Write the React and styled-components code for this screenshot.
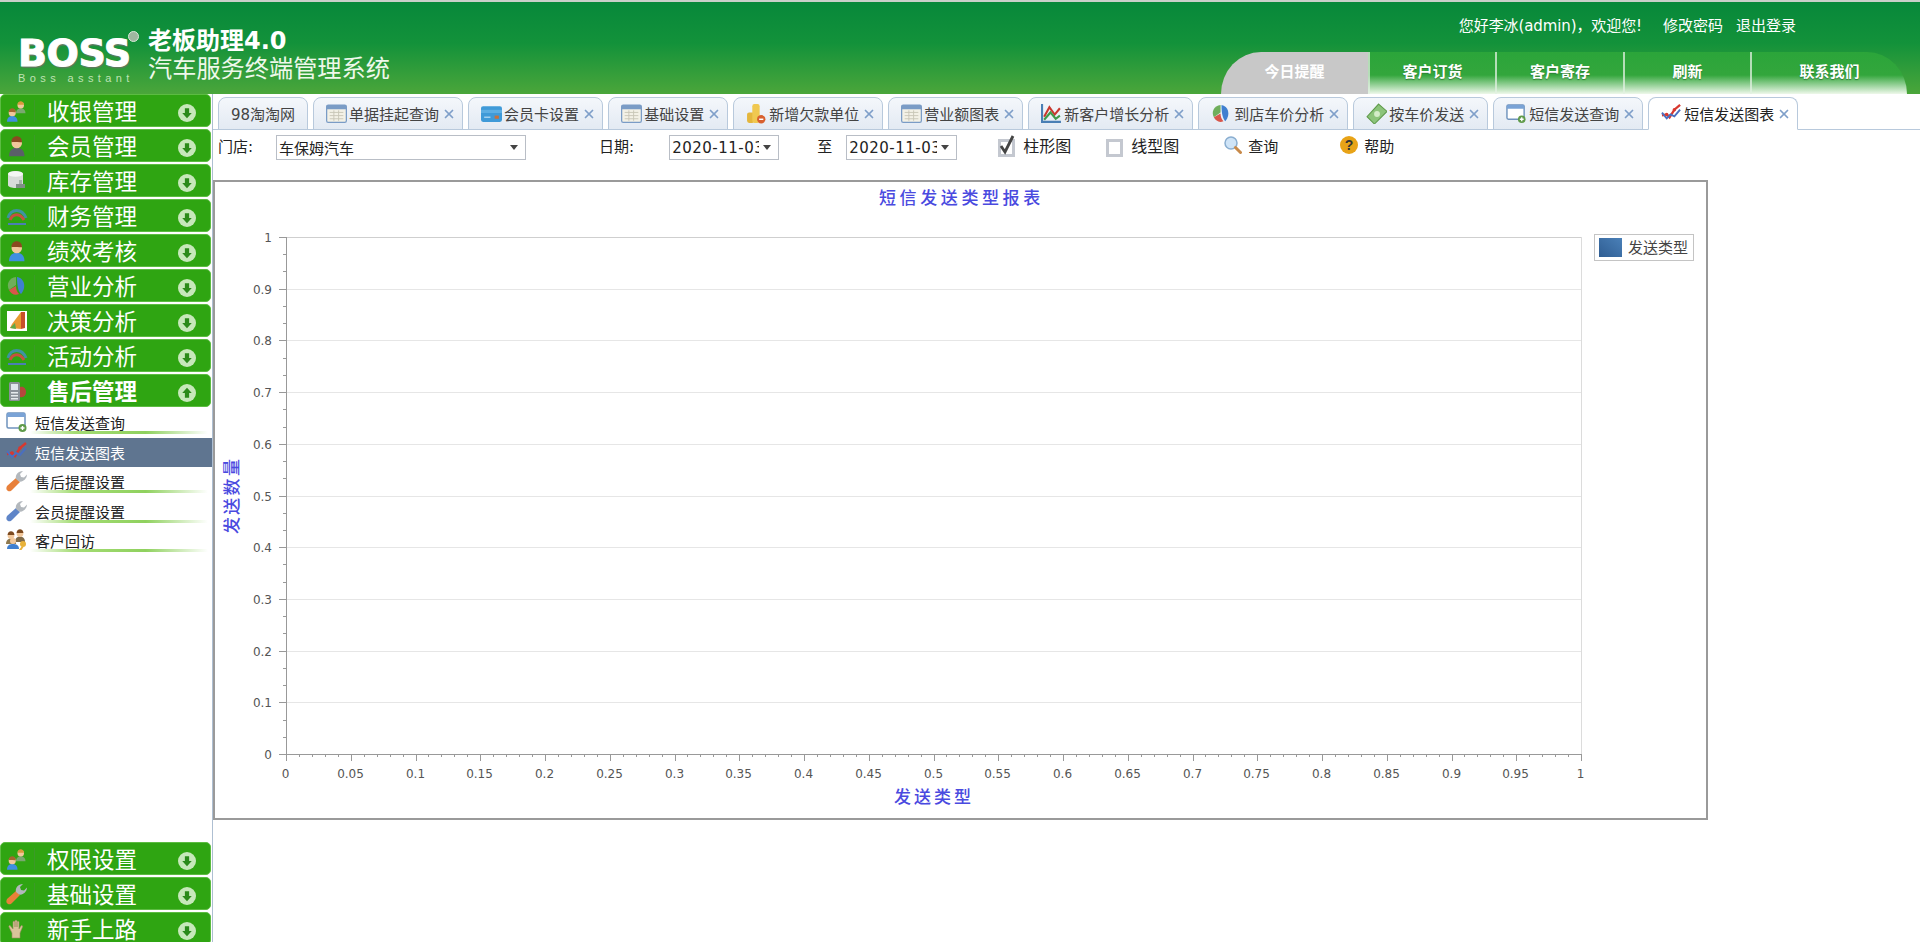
import React from 'react';
import styled, { createGlobalStyle } from 'styled-components';
import { X } from 'lucide-react';

const GlobalStyle = createGlobalStyle`
  html, body {
    margin: 0;
    height: 100%;
    overflow: hidden;
    background: #fff;
    font-family: "DejaVu Sans", "Noto Sans CJK SC", sans-serif;
  }
`;

const Page = styled.div`
  height: 942px;
  display: flex;
  flex-direction: column;
  overflow: hidden;
`;

/* header */
const Header = styled.header`
  height: 92px;
  flex: none;
  border-top: 2px solid #c9cfc9;
  background: linear-gradient(#07883a 0%, #13923a 45%, #4ba63a 100%);
  display: flex;
  justify-content: space-between;
`;

const Brand = styled.div`
  display: flex;
  gap: 16px;
  padding-left: 18px;
`;

const BossMark = styled.div`
  position: relative;
  width: 114px;
  padding-top: 33px;
`;

const BossWord = styled.div`
  font-size: 38px;
  line-height: 36px;
  font-weight: 700;
  color: #fff;
  -webkit-text-stroke: 1px #fff;
  text-shadow: 1px 2px 1px #5d7a5d;
  letter-spacing: -0.4px;
`;

const BossSub = styled.div`
  font-family: "Liberation Sans", sans-serif;
  font-size: 11px;
  line-height: 12px;
  margin-top: 1px;
  color: #bfe3b4;
  letter-spacing: 4.4px;
  white-space: nowrap;
`;

const RegMark = styled.div`
  position: absolute;
  top: 29px;
  right: -7px;
  width: 9px;
  height: 9px;
  border: 1px solid #d8e8d8;
  border-radius: 50%;
  background: #9fb7a0;
`;

const BrandTitle = styled.div`
  padding-top: 26px;
  color: #fff;
`;

const TitleMain = styled.div`
  font-size: 24px;
  line-height: 27px;
  font-weight: 700;
`;

const TitleSub = styled.div`
  font-size: 24.2px;
  line-height: 28px;
  color: #eef8ea;
  white-space: nowrap;
`;

const HeaderRight = styled.div`
  display: flex;
  flex-direction: column;
  align-items: flex-end;
  padding-right: 13px;
`;

const Greeting = styled.div`
  display: flex;
  margin: 15px 111px 0 0;
  gap: 13px;
  font-size: 15px;
  line-height: 18px;
  color: #fff;
`;

const GreetingName = styled.span`
  margin-right: 8px;
  letter-spacing: -0.1px;
`;

const Nav = styled.nav`
  display: flex;
  margin-top: auto;
`;

const NavTab = styled.div`
  width: ${p => p.$w}px;
  height: 42px;
  box-sizing: border-box;
  display: flex;
  align-items: center;
  justify-content: center;
  padding-bottom: 5px;
  font-size: 15px;
  font-weight: 700;
  color: #fff;
  text-shadow: ${p => (p.$active ? 'none' : '0 1px 1px #2f7d35')};
  background: ${p => (p.$active ? '#c8c8c8' : 'linear-gradient(#2ba53a 0%, #33a63c 55%, #eef8ea 100%)')};
  border-left: ${p => (p.$active ? '0' : '2px solid rgba(225, 240, 225, 0.75)')};
  border-top-left-radius: ${p => (p.$active ? '40px 42px' : '0')};
  border-top-right-radius: ${p => (p.$last ? '40px 42px' : '0')};
`;

/* body */
const Body = styled.div`
  flex: 1;
  min-height: 0;
  display: flex;
`;

const Sidebar = styled.aside`
  width: 212px;
  flex: none;
  border-right: 1px solid #aebfd2;
  display: flex;
  flex-direction: column;
  overflow: hidden;
`;

const MenuTop = styled.div`
  flex: 1;
  min-height: 0;
`;

const MenuBottom = styled.div`
  height: 100px;
  flex: none;
  overflow: hidden;
`;

const MenuItem = styled.div`
  height: 33px;
  width: 211px;
  margin-bottom: 2px;
  box-sizing: border-box;
  display: flex;
  align-items: center;
  background: #2fa512;
  border: 1px solid #5cbc42;
  border-radius: 5px;
  color: #fff;
`;

const MenuIcon = styled.span`
  width: 34px;
  height: 22px;
  flex: none;
  padding-left: 5px;
  box-sizing: border-box;
  display: flex;
  align-items: center;
  border-right: 1px solid #3c9a28;
`;

const MenuLabel = styled.span`
  flex: 1;
  margin-left: 12px;
  padding-top: 3px;
  font-size: 22.5px;
  line-height: 28px;
  font-weight: ${p => (p.$open ? 700 : 400)};
`;

const MenuArrow = styled.span`
  display: flex;
  margin: 4px 14px 0 0;
`;

const SubList = styled.div`
  margin-top: -1px;
`;

const SubItem = styled.div`
  height: 29.5px;
  display: flex;
  align-items: flex-start;
  padding-left: 6px;
  font-size: 15px;
  line-height: 32px;
  color: ${p => (p.$active ? '#fff' : '#222')};
  background: ${p =>
    p.$active
      ? '#5f7590'
      : 'linear-gradient(to right, transparent, #a4dc74 25%, #8fd15e 65%, transparent) 30px 23px / 178px 3px no-repeat'};
`;

const SubIcon = styled.span`
  width: 29px;
  height: 28px;
  flex: none;
  display: flex;
  align-items: center;
`;

/* main */
const Main = styled.main`
  flex: 1;
  min-width: 0;
  display: flex;
  flex-direction: column;
`;

const TabBar = styled.div`
  height: 36px;
  flex: none;
  box-sizing: border-box;
  display: flex;
  align-items: flex-end;
  gap: 5px;
  padding-left: 5px;
  border-bottom: 1px solid #b8c9dc;
`;

const Tab = styled.div`
  height: 33px;
  box-sizing: border-box;
  display: flex;
  align-items: center;
  margin-bottom: -1px;
  padding: ${p => (p.$plain ? '0 12px' : '0 8px 0 12px')};
  font-size: 15px;
  color: ${p => (p.$active ? '#222' : '#444')};
  white-space: nowrap;
  border: 1px solid #b8c9dc;
  border-bottom-color: ${p => (p.$active ? '#fff' : '#b8c9dc')};
  border-radius: 8px 8px 0 0;
  background: ${p => (p.$active ? '#fff' : 'linear-gradient(#f4f7fb, #e3eaf3)')};
`;

const TabIcon = styled.span`
  width: 19px;
  height: 21px;
  margin-right: 4px;
  display: flex;
  align-items: center;

  svg {
    width: 21px;
    height: 21px;
    flex: none;
  }
`;

const TabClose = styled.span`
  width: 10px;
  margin-left: 5px;
  display: flex;
  justify-content: center;
  color: #7f9fc9;

  svg {
    flex: none;
  }
`;

const Toolbar = styled.div`
  height: 50px;
  flex: none;
  display: flex;
  align-items: flex-start;
  padding: 5px 0 0 5px;
  box-sizing: border-box;
`;

const ToolText = styled.span`
  margin-left: ${p => p.$ml || 0}px;
  font-size: ${p => p.$size || 15}px;
  line-height: 24px;
  color: #222;
  white-space: nowrap;
`;

const Select = styled.div`
  width: ${p => p.$w}px;
  height: 25px;
  margin-left: ${p => p.$ml}px;
  box-sizing: border-box;
  display: flex;
  align-items: center;
  justify-content: space-between;
  padding: 0 7px 0 2px;
  border: 1px solid #b9bec6;
  font-size: 15px;
  letter-spacing: ${p => (p.$date ? '0.5px' : '0')};
  color: #222;
  background: #fff;
`;

const SelectValue = styled.span`
  overflow: hidden;
  white-space: nowrap;
  flex: 1;
  min-width: 0;
`;

const SelectCaret = styled.span`
  flex: none;
  margin-left: 4px;
  border-left: 4px solid transparent;
  border-right: 4px solid transparent;
  border-top: 5px solid #444;
`;

const CheckBox = styled.span`
  width: 17px;
  height: 18px;
  margin: 4px 0 0 ${p => p.$ml}px;
  box-sizing: border-box;
  display: flex;
  align-items: center;
  justify-content: center;
  background: #fff;
  border: 3px solid #c4c8d0;
`;

const ToolIcon = styled.span`
  width: 18px;
  height: 18px;
  margin: 1px 0 0 ${p => p.$ml}px;
  display: flex;
`;

const ChartBox = styled.div`
  width: 1495px;
  height: 640px;
  box-sizing: border-box;
  border: 2px solid #9a9a9a;
  background: #fff;
`;

/* icons */
const Ic = ({ children, vb = 22 }) => (
  <svg width="22" height="22" viewBox={`0 0 ${vb} ${vb}`}>{children}</svg>
);

const Person = ({ x, y, s = 1, shirt, hair = '#a5662e' }) => (
  <g transform={`translate(${x} ${y}) scale(${s})`}>
    <path d="M0 13c0-4 2.500-5.500 5-5.500s5 1.500 5 5.500z" fill={shirt} />
    <circle cx="5" cy="4.500" r="3.400" fill="#f1c79b" />
    <path d="M1.600 4c0-2.500 1.600-3.800 3.400-3.800s3.400 1.300 3.400 3.800c-2 .2-4.500-.3-6.800 0z" fill={hair} />
  </g>
);

const UsersIcon = () => (
  <Ic>
    <Person x={10} y={1} s={0.95} shirt="#7aa870" hair="#d99a3c" />
    <Person x={1} y={8} s={1.05} shirt="#3f8fe0" />
  </Ic>
);
const WorkerIcon = () => (
  <Ic><Person x={3} y={1} s={1.55} shirt="#5a5f68" hair="#8a4a20" /></Ic>
);
const BlueManIcon = () => (
  <Ic><Person x={3} y={1} s={1.55} shirt="#3f8fe0" hair="#8a4a20" /></Ic>
);
const DbIcon = () => (
  <Ic>
    <path d="M2 4c0-4 15-4 15 0v11c0 4-15 4-15 0z" fill="#d7dcd8" />
    <ellipse cx="9.500" cy="4" rx="7.500" ry="2.800" fill="#f4f6f4" />
    <path d="M10 14h9v4h-9z" fill="#7f8f85" />
    <path d="M13 10h3v4h-3z" fill="#a5b2aa" />
  </Ic>
);
const ArcIcon = () => (
  <Ic>
    <path d="M2 13C5 3 16 3 20 13" fill="none" stroke="#3d93a0" strokeWidth="3" />
    <path d="M4 15C7 8 14 8 18 15" fill="none" stroke="#c8503f" strokeWidth="3" />
    <path d="M2 19h18" stroke="#4a7fb5" strokeWidth="2" />
  </Ic>
);
const PieIcon = () => (
  <Ic>
    <path d="M10 10 3 15C0 9 3 3 10 2z" fill="#6fae5b" />
    <path d="M11 2c7 1 10 10 4 17-2-2-4-6-4-17z" fill="#3f7fd0" />
    <path d="M3 15l7-4c0 3 1 6 3 8-4 2-8 0-10-4z" fill="#d8564a" />
  </Ic>
);
const DecisionIcon = () => (
  <Ic>
    <path d="M1 1h20v20H1z" fill="#fff" />
    <path d="M15 2h4v16l-4 1z" fill="#c8502a" />
    <path d="M15 2 6 14l-2 4 11 1z" fill="#e89a32" />
    <path d="M4 18l5-5 1 6z" fill="#5fa84a" />
  </Ic>
);
const PhoneIcon = () => (
  <Ic>
    <path d="M14 7c4-1 6 2 6 5s-2 6-6 5z" fill="#b5473c" />
    <rect x="3" y="2" width="11" height="19" rx="1.500" fill="#8a9097" />
    <rect x="5" y="4" width="7" height="6" fill="#dfe6ec" />
    <path d="M5 12h7v1.500H5zM5 15h7v1.500H5zM5 18h7v1.500H5z" fill="#e6e9ec" />
  </Ic>
);
const WindowPlusIcon = () => (
  <Ic>
    <rect x="1" y="2" width="18" height="15" rx="1.500" fill="#fff" stroke="#6f93bd" strokeWidth="1.500" />
    <path d="M1 3.500C1 2.500 2 2 2.500 2h15c1 0 1.500.5 1.500 1.500V6H1z" fill="#7aa3d6" />
    <circle cx="16.500" cy="17" r="4" fill="#5f9a4a" />
    <path d="M14.500 17h4M16.500 15v4" stroke="#fff" strokeWidth="1.400" />
  </Ic>
);
const LineChartIcon = () => (
  <Ic>
    <path d="M1 13l5-1 3 3 5-8 6-5" fill="none" stroke="#d8382f" strokeWidth="2.400" />
    <path d="M1 10l5 6 4-4 4 2 6-7" fill="none" stroke="#4a6fc0" strokeWidth="2" />
    <circle cx="6" cy="12" r="1.800" fill="#d8382f" />
    <circle cx="14" cy="7" r="1.800" fill="#d8382f" />
  </Ic>
);
const WrenchIcon = ({ color }) => (
  <Ic>
    <path d="M2 21c-2-1-2-3-1-5L10 8l4 4-8 8c-1 1.500-3 1.500-4 1z" fill={color} />
    <path d="M10 9c-1-4 2-8 7-8l-3 3 1 3 3 .5 3-3c0 4-4 8-8 7z" fill="#b3b8bd" />
  </Ic>
);
const PeopleKeyIcon = () => (
  <Ic>
    <Person x={9} y={0} s={1} shirt="#7f6a48" hair="#7c4a20" />
    <Person x={0} y={2} s={1} shirt="#8f7a50" hair="#7c4a20" />
    <path d="M1 20c0-4 3-5 6-5s6 1 6 5z" fill="#3f7fd0" />
    <circle cx="7" cy="12" r="3" fill="#f1c79b" />
    <circle cx="17" cy="15" r="3" fill="#e8b23a" />
    <path d="M16 17l-3 4h2.500l2-3z" fill="#e8b23a" />
  </Ic>
);
const HandIcon = () => (
  <Ic>
    <path d="M6 20v-5L3 9c-.6-1 .8-2 1.500-1L7 11V4c0-1 2-1 2 0v5-6c0-1 2-1 2 0v6-5c0-1 2-1 2 0v7l2-3c.7-1 2 0 1.500 1L14 15v5z" fill="#d9c49a" stroke="#9a8a60" strokeWidth=".6" />
  </Ic>
);
const TableIcon = () => (
  <Ic vb={20}>
    <rect x="0.600" y="2" width="18.800" height="16.500" rx="1.500" fill="#f3f1e6" stroke="#7a9cc6" strokeWidth="1.200" />
    <path d="M.6 3.500C.6 2.500 1.500 2 2.500 2h15c1 0 1.900.5 1.900 1.500V6H.6z" fill="#7a9cc6" />
    <path d="M3.500 9h13M3.500 12h13M3.500 15h13M7.500 7v10M12 7v10" stroke="#c9c7b8" strokeWidth=".9" />
  </Ic>
);
const CardIcon = () => (
  <Ic vb={20}>
    <rect x="0" y="3" width="20" height="15" rx="2" fill="#3f9ad8" />
    <path d="M0 8h20" stroke="#7cc3ee" strokeWidth="3" opacity=".5" />
    <rect x="13" y="12" width="4" height="3" fill="#c9703a" />
    <path d="M3 13.500h6" stroke="#cfe8f8" />
  </Ic>
);
const CoinsIcon = () => (
  <Ic vb={20}>
    <rect x="1" y="9" width="7" height="10" rx="2" fill="#e4b63c" />
    <rect x="6" y="1" width="7" height="18" rx="2" fill="#f0c850" />
    <circle cx="14.500" cy="15.500" r="4" fill="#d8602f" />
    <path d="M12.500 15.500h4" stroke="#fff" strokeWidth="1.400" />
  </Ic>
);
const GrowthIcon = () => (
  <Ic vb={20}>
    <path d="M1 1v17h18" fill="none" stroke="#4a7fb5" strokeWidth="2" />
    <path d="M3 13l5-9 5 7 5-6" fill="none" stroke="#c8382f" strokeWidth="2" />
    <path d="M3 16l6-7 5 6 4-3" fill="none" stroke="#3f9a4a" strokeWidth="2" />
  </Ic>
);
const MoneyIcon = () => (
  <Ic vb={20}>
    <path d="M12 1l8 7-12 12-7-7z" fill="#8cc47a" stroke="#5f9a4a" />
    <circle cx="10.500" cy="10.500" r="2.800" fill="#d4ecc8" />
  </Ic>
);
const SearchIcon = () => (
  <svg width="18" height="18" viewBox="0 0 18 18">
    <circle cx="7" cy="7" r="6" fill="#cfe4f7" stroke="#8aaed0" strokeWidth="1.500" />
    <path d="M11.500 11.500 16.500 16.500" stroke="#c88a4a" strokeWidth="3" strokeLinecap="round" />
  </svg>
);
const HelpIcon = () => (
  <svg width="18" height="18" viewBox="0 0 18 18">
    <circle cx="9" cy="9" r="9" fill="#e8a317" />
    <text x="9" y="14" textAnchor="middle" fontSize="14" fontWeight="700" fill="#333" fontFamily="Liberation Sans">?</text>
  </svg>
);
const CheckMark = () => (
  <svg width="16" height="20" viewBox="0 0 16 20" style={{ marginTop: -6, flex: 'none' }}>
    <path d="M2 11l4 6L14 1" fill="none" stroke="#444" strokeWidth="2.800" />
  </svg>
);
const ArrowCircle = ({ up }) => (
  <svg width="18" height="18" viewBox="0 0 17 17">
    <circle cx="8.500" cy="8.500" r="8.500" fill="#c6e8ba" />
    <path d={up ? 'M8.500 3.500 13 8.500h-2.500V13h-4V8.500H4z' : 'M8.500 13.500 13 8.500h-2.500V4h-4v4.500H4z'} fill="#2a8a1a" />
  </svg>
);

const topMenus = [
  { label: '收银管理', icon: <UsersIcon /> },
  { label: '会员管理', icon: <WorkerIcon /> },
  { label: '库存管理', icon: <DbIcon /> },
  { label: '财务管理', icon: <ArcIcon /> },
  { label: '绩效考核', icon: <BlueManIcon /> },
  { label: '营业分析', icon: <PieIcon /> },
  { label: '决策分析', icon: <DecisionIcon /> },
  { label: '活动分析', icon: <ArcIcon /> },
  { label: '售后管理', icon: <PhoneIcon />, open: true },
];

const subMenus = [
  { label: '短信发送查询', icon: <WindowPlusIcon /> },
  { label: '短信发送图表', icon: <LineChartIcon />, active: true },
  { label: '售后提醒设置', icon: <WrenchIcon color="#e8803a" /> },
  { label: '会员提醒设置', icon: <WrenchIcon color="#5f85c8" /> },
  { label: '客户回访', icon: <PeopleKeyIcon /> },
];

const bottomMenus = [
  { label: '权限设置', icon: <UsersIcon /> },
  { label: '基础设置', icon: <WrenchIcon color="#e8803a" /> },
  { label: '新手上路', icon: <HandIcon /> },
];

const tabs = [
  { label: '98淘淘网' },
  { label: '单据挂起查询', icon: <TableIcon /> },
  { label: '会员卡设置', icon: <CardIcon /> },
  { label: '基础设置', icon: <TableIcon /> },
  { label: '新增欠款单位', icon: <CoinsIcon /> },
  { label: '营业额图表', icon: <TableIcon /> },
  { label: '新客户增长分析', icon: <GrowthIcon /> },
  { label: '到店车价分析', icon: <PieIcon /> },
  { label: '按车价发送', icon: <MoneyIcon /> },
  { label: '短信发送查询', icon: <WindowPlusIcon /> },
  { label: '短信发送图表', icon: <LineChartIcon />, active: true },
];

const navTabs = [
  { label: '今日提醒', w: 147, active: true },
  { label: '客户订货', w: 127 },
  { label: '客户寄存', w: 128 },
  { label: '刷新', w: 127 },
  { label: '联系我们', w: 157, last: true },
];

const Chart = () => {
  const left = 71;
  const right = 1366;
  const top = 55;
  const bottom = 572;
  const xStep = (right - left) / 100;
  const yStep = (bottom - top) / 30;
  const labelFont = '"DejaVu Sans", sans-serif';
  const titleFont = '"Noto Sans CJK SC", sans-serif';

  const fmt = n => String(Number(n.toFixed(2)));

  return (
    <svg width="1491" height="636" viewBox="0 0 1491 636" shapeRendering="crispEdges">
      <defs>
        <linearGradient id="legendFill" x1="0" x2="1" y1="1" y2="0">
          <stop offset="0" stopColor="#2f5d92" />
          <stop offset="1" stopColor="#4a80b8" />
        </linearGradient>
      </defs>

      <text x="664" y="22" fontSize="17" fontWeight="500" letterSpacing="3.600" fill="#4a4adf" shapeRendering="auto" fontFamily={titleFont}>短信发送类型报表</text>

      {/* horizontal grid + y ticks */}
      {Array.from({ length: 31 }, (_, i) => {
        const y = Math.round(top + i * yStep) + 0.5;
        const major = i % 3 === 0;
        const value = 1 - i / 30;
        return (
          <g key={i}>
            {major && i < 30 && <line x1={left} x2={right} y1={y} y2={y} stroke={i === 0 ? '#cfcfcf' : '#e6e6e6'} />}
            <line x1={major ? left - 7 : left - 3} x2={left} y1={y} y2={y} stroke="#999" />
            {major && (
              <text x="57" y={y + 4.5} textAnchor="end" fontSize="12" fill="#555" fontFamily={labelFont} shapeRendering="auto">
                {fmt(value)}
              </text>
            )}
          </g>
        );
      })}

      {/* x ticks */}
      {Array.from({ length: 101 }, (_, i) => {
        const x = Math.round(left + i * xStep) + 0.5;
        const major = i % 5 === 0;
        return (
          <g key={i}>
            <line x1={x} x2={x} y1={bottom} y2={bottom + (major ? 7 : 3)} stroke="#999" />
            {major && (
              <text x={x - 1} y={bottom + 24} textAnchor="middle" fontSize="12" fill="#555" fontFamily={labelFont} shapeRendering="auto">
                {fmt(i / 100)}
              </text>
            )}
          </g>
        );
      })}

      <line x1={left + 0.5} x2={left + 0.5} y1={top} y2={bottom} stroke="#999" />
      <line x1={left} x2={right} y1={bottom + 0.5} y2={bottom + 0.5} stroke="#999" />
      <line x1={right + 0.5} x2={right + 0.5} y1={top} y2={bottom} stroke="#dcdcdc" />

      <text x="679" y="621" fontSize="17" fontWeight="500" letterSpacing="3" fill="#4a4adf" shapeRendering="auto" fontFamily={titleFont}>发送类型</text>
      <text transform="translate(23 352) rotate(-90)" fontSize="17" fontWeight="500" letterSpacing="2.300" fill="#4a4adf" shapeRendering="auto" fontFamily={titleFont}>发送数量</text>

      {/* legend */}
      <rect x="1379.500" y="52.500" width="99" height="26" fill="#fff" stroke="#c4c4c4" />
      <rect x="1384" y="56" width="23" height="19" fill="url(#legendFill)" />
      <text x="1413" y="71" fontSize="15" fill="#444" shapeRendering="auto" fontFamily={titleFont}>发送类型</text>
    </svg>
  );
};

const App = () => {
  return (
    <Page>
      <GlobalStyle />
      <Header>
        <Brand>
          <BossMark>
            <BossWord>BOSS</BossWord>
            <BossSub>Boss asstant</BossSub>
            <RegMark />
          </BossMark>
          <BrandTitle>
            <TitleMain>老板助理4.0</TitleMain>
            <TitleSub>汽车服务终端管理系统</TitleSub>
          </BrandTitle>
        </Brand>
        <HeaderRight>
          <Greeting>
            <GreetingName>{'您好李冰(admin)\uFF0C欢迎您!'}</GreetingName>
            <span>修改密码</span>
            <span>退出登录</span>
          </Greeting>
          <Nav>
            {navTabs.map(tab => (
              <NavTab key={tab.label} $w={tab.w} $active={tab.active} $last={tab.last}>
                {tab.label}
              </NavTab>
            ))}
          </Nav>
        </HeaderRight>
      </Header>

      <Body>
        <Sidebar>
          <MenuTop>
            {topMenus.map(item => (
              <MenuItem key={item.label}>
                <MenuIcon>{item.icon}</MenuIcon>
                <MenuLabel $open={item.open}>{item.label}</MenuLabel>
                <MenuArrow><ArrowCircle up={item.open} /></MenuArrow>
              </MenuItem>
            ))}
            <SubList>
              {subMenus.map(item => (
                <SubItem key={item.label} $active={item.active}>
                  <SubIcon>{item.icon}</SubIcon>
                  {item.label}
                </SubItem>
              ))}
            </SubList>
          </MenuTop>
          <MenuBottom>
            {bottomMenus.map(item => (
              <MenuItem key={item.label}>
                <MenuIcon>{item.icon}</MenuIcon>
                <MenuLabel>{item.label}</MenuLabel>
                <MenuArrow><ArrowCircle /></MenuArrow>
              </MenuItem>
            ))}
          </MenuBottom>
        </Sidebar>

        <Main>
          <TabBar>
            {tabs.map(tab => (
              <Tab key={tab.label} $active={tab.active} $plain={!tab.icon}>
                {tab.icon && <TabIcon>{tab.icon}</TabIcon>}
                {tab.label}
                {tab.icon && <TabClose><X size={14} strokeWidth={3} /></TabClose>}
              </Tab>
            ))}
          </TabBar>

          <Toolbar>
            <ToolText>门店:</ToolText>
            <Select $w={250} $ml={23}>
              <SelectValue>车保姆汽车</SelectValue>
              <SelectCaret />
            </Select>
            <ToolText $ml={73}>日期:</ToolText>
            <Select $w={110} $ml={35} $date>
              <SelectValue>2020-11-03</SelectValue>
              <SelectCaret />
            </Select>
            <ToolText $ml={38}>至</ToolText>
            <Select $w={111} $ml={14} $date>
              <SelectValue>2020-11-03</SelectValue>
              <SelectCaret />
            </Select>
            <CheckBox $ml={41}><CheckMark /></CheckBox>
            <ToolText $ml={8} $size={16}>柱形图</ToolText>
            <CheckBox $ml={35} />
            <ToolText $ml={8} $size={16}>线型图</ToolText>
            <ToolIcon $ml={45}><SearchIcon /></ToolIcon>
            <ToolText $ml={6}>查询</ToolText>
            <ToolIcon $ml={62}><HelpIcon /></ToolIcon>
            <ToolText $ml={6}>帮助</ToolText>
          </Toolbar>

          <ChartBox>
            <Chart />
          </ChartBox>
        </Main>
      </Body>
    </Page>
  );
};

export default App;
